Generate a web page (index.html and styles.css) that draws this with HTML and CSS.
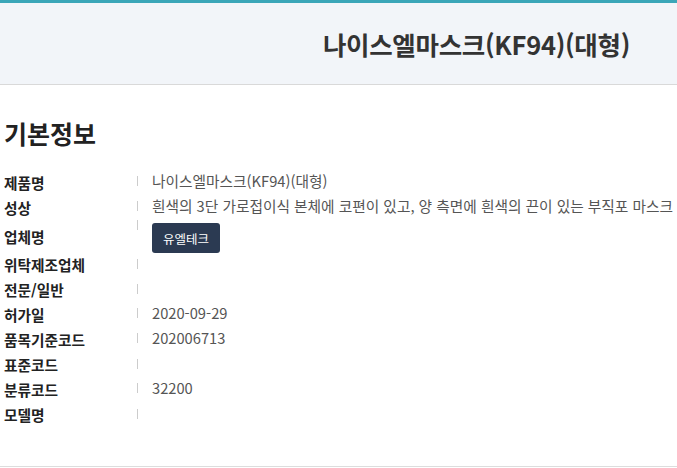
FILE: index.html
```html
<!DOCTYPE html>
<html lang="ko">
<head>
    <meta charset="UTF-8">
    <meta name="viewport" content="width=device-width, initial-scale=1.0">
    <title>나이스엘마스크(KF94)(대형)</title>
    <link rel="stylesheet" href="styles.css">
</head>
<body>
    <!-- Product title bar -->
    <div class="title-bar">
        <h1>나이스엘마스크(KF94)(대형)</h1>
    </div>

    <!-- Basic info -->
    <div class="info">
        <h2>기본정보</h2>
        <div class="info-list">
            <div class="info-row">
                <span class="label">제품명</span>
                <span class="value">나이스엘마스크(KF94)(대형)</span>
            </div>
            <div class="info-row">
                <span class="label">성상</span>
                <span class="value">흰색의 3단 가로접이식 본체에 코편이 있고, 양 측면에 흰색의 끈이 있는 부직포 마스크</span>
            </div>
            <div class="info-row btn-row">
                <span class="label">업체명</span>
                <span class="value"><button class="company-btn">유엘테크</button></span>
            </div>
            <div class="info-row">
                <span class="label">위탁제조업체</span>
                <span class="value"></span>
            </div>
            <div class="info-row">
                <span class="label">전문/일반</span>
                <span class="value"></span>
            </div>
            <div class="info-row">
                <span class="label">허가일</span>
                <span class="value">2020-09-29</span>
            </div>
            <div class="info-row">
                <span class="label">품목기준코드</span>
                <span class="value">202006713</span>
            </div>
            <div class="info-row">
                <span class="label">표준코드</span>
                <span class="value"></span>
            </div>
            <div class="info-row">
                <span class="label">분류코드</span>
                <span class="value">32200</span>
            </div>
            <div class="info-row">
                <span class="label">모델명</span>
                <span class="value"></span>
            </div>
        </div>
    </div>
</body>
</html>
```

FILE: styles.css
```css
body {
    font-family: "Noto Sans CJK KR", "Noto Sans", sans-serif;
    background-color: #fff;
    color: #222;
    margin: 0;
    padding: 0;
}
.title-bar {
    border-top: 3px solid #3ba6b8;
    border-bottom: 1px solid #d9d9d9;
    background-color: #f2f5f9;
    height: 81px;
    display: flex;
    align-items: center;
    justify-content: flex-end;
    padding-right: 47px;
}
.title-bar h1 {
    margin: 0;
    font-size: 25.5px;
    font-weight: bold;
    color: #333;
    letter-spacing: -0.3px;
}
.info {
    padding: 0 4px;
    height: 381px;
    border-bottom: 1px solid #ddd;
}
.info h2 {
    margin: 0;
    padding-top: 30px;
    font-size: 25px;
    font-weight: bold;
    color: #222;
    line-height: 36px;
}
.info-list {
    margin-top: 17px;
}
.info-row {
    display: flex;
    align-items: center;
    height: 25px;
    font-size: 14.7px;
}
.info-row.btn-row {
    height: 32px;
}
.btn-row .value {
    margin-top: 8px;
}
.label {
    width: 133px;
    font-weight: bold;
    color: #222;
    padding-top: 4px;
    white-space: nowrap;
}
.value {
    position: relative;
    padding-left: 15px;
    color: #555;
    white-space: nowrap;
    min-height: 20px;
    display: flex;
    align-items: center;
}
.value::before {
    content: "";
    position: absolute;
    left: 0;
    top: 6px;
    width: 1px;
    height: 10px;
    background-color: #ccc;
}
.btn-row .value::before {
    top: -3px;
}
.company-btn {
    font-family: inherit;
    font-size: 12.5px;
    color: #fff;
    background-color: #2b3a52;
    border: none;
    border-radius: 3px;
    height: 30px;
    padding: 0 11px;
}
```
